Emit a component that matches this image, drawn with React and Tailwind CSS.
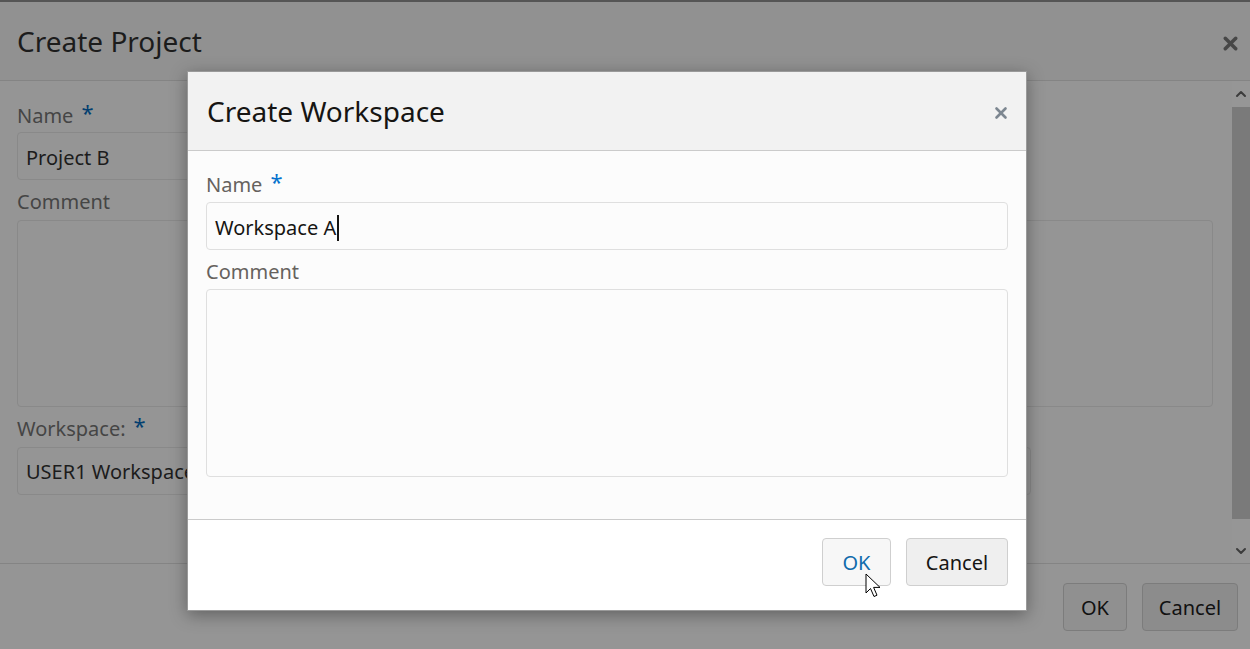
import { X, ChevronUp, ChevronDown } from 'lucide-react';

const font = { fontFamily: '"Noto Sans", "Open Sans", sans-serif' };

const Star = ({ className }) => (
  <span className={`ml-2 text-[22px] leading-none relative top-[-4px] ${className}`}>*</span>
);

const CursorArrow = () => (
  <svg width="20" height="28" viewBox="0 0 20 28" className="absolute left-[865px] top-[573px]">
    <path d="M1 1 L1 20 L5.5 15.5 L9 23.5 L12 22.2 L8.6 14.4 L15 14.4 Z" fill="#fff" stroke="#000" strokeWidth="1" strokeLinejoin="round" />
  </svg>
);

export default function App() {
  return (
    <div style={font} className="relative w-[1250px] h-[649px] overflow-hidden bg-[#959595] text-[#161513]">
      {/* dimmed parent dialog */}
      <div className="flex flex-col h-full border-t-2 border-[#555]">
        <div className="h-[79px] shrink-0 flex items-center justify-between pl-[17px] pr-[9px] bg-[#919191] border-b border-[#848484]">
          <h1 className="text-[28px] text-[#1c1c1c]">Create Project</h1>
          <X size={21} strokeWidth={4} className="text-[#474747] mt-[4px]" />
        </div>
        <div className="flex h-[482px] shrink-0">
          <div className="flex-1 pl-[17px] pr-[19px] pt-[18px] flex flex-col">
            <div className="h-[33px] flex items-center text-[20px] text-[#454545]">
              Name <Star className="text-[#033f70]" />
            </div>
            <div className="h-[48px] w-[700px] border border-[#898989] rounded-[4px] flex items-center pl-[8px] pt-[4px] text-[20px] text-[#1c1c1c]">
              Project B
            </div>
            <div className="h-[40px] flex items-center pt-[4px] text-[20px] text-[#454545]">Comment</div>
            <div className="h-[187px] border border-[#898989] rounded-[4px]" />
            <div className="h-[40px] flex items-center pt-[3px] text-[20px] text-[#454545]">
              Workspace: <Star className="text-[#033f70]" />
            </div>
            <div className="h-[48px] w-[1014px] border border-[#898989] rounded-[4px] flex items-center pl-[8px] pt-[1px] text-[20px] text-[#1c1c1c]">
              USER1 Workspace
            </div>
          </div>
          <div className="w-[18px] flex flex-col bg-[#969696]">
            <div className="h-[26px] flex items-center justify-center">
              <ChevronUp size={16} strokeWidth={3} className="text-[#3c3c3c]" />
            </div>
            <div className="flex-1 bg-[#7a7a7a] mb-[4px]" />
            <div className="h-[40px] flex items-end justify-center pb-[4px]">
              <ChevronDown size={16} strokeWidth={3} className="text-[#3c3c3c]" />
            </div>
          </div>
        </div>
        <div className="flex-1 border-t border-[#848484] flex justify-end items-start gap-[15px] pt-[19px] pr-[12px]">
          <button className="h-[48px] w-[64px] border border-[#7c7c7c] rounded-[4px] bg-[#909090] pt-[2px] text-[20px] text-[#111]">OK</button>
          <button className="h-[48px] w-[96px] border border-[#7c7c7c] rounded-[4px] bg-[#8c8c8c] pt-[2px] text-[20px] text-[#111]">Cancel</button>
        </div>
      </div>

      {/* Create Workspace modal */}
      <div className="absolute left-[187px] top-[71px] w-[840px] h-[540px] flex flex-col border border-[#9a9a9a] bg-[#fcfcfc] shadow-[0_4px_16px_rgba(0,0,0,0.35)]">
        <div className="h-[79px] shrink-0 flex items-center justify-between pl-[19px] pr-[16px] bg-[#f2f2f2] border-b border-[#cbcbcb]">
          <h2 className="text-[28px] text-[#161513]">Create Workspace</h2>
          <X size={18} strokeWidth={3.5} className="text-[#7d8791] mt-[3px]" />
        </div>
        <div className="h-[368px] shrink-0 px-[18px] pt-[17px] flex flex-col">
          <div className="h-[34px] flex items-center text-[20px] text-[#66625e]">
            Name <Star className="text-[#0572ce]" />
          </div>
          <div className="h-[48px] border border-[#dfdfdf] rounded-[4px] bg-[#fcfcfc] flex items-center pl-[8px] pt-[4px] text-[20px] text-[#161513]">
            Workspace A<span className="inline-block w-[1.5px] h-[26px] bg-[#161513] ml-[1px]" />
          </div>
          <div className="h-[39px] flex items-center pt-[4px] text-[20px] text-[#66625e]">Comment</div>
          <div className="h-[188px] border border-[#dfdfdf] rounded-[4px] bg-[#fcfcfc]" />
        </div>
        <div className="flex-1 border-t border-[#cbcbcb] bg-white flex justify-end items-start gap-[15px] pt-[18px] pr-[18px]">
          <button className="h-[48px] w-[69px] border border-[#cfcfcf] rounded-[4px] bg-[#f7f7f7] pt-[2px] text-[20px] text-[#0f6bac]">OK</button>
          <button className="h-[48px] w-[102px] border border-[#cfcfcf] rounded-[4px] bg-[#efefef] pt-[2px] text-[20px] text-[#161513]">Cancel</button>
        </div>
      </div>

      <CursorArrow />
    </div>
  );
}
